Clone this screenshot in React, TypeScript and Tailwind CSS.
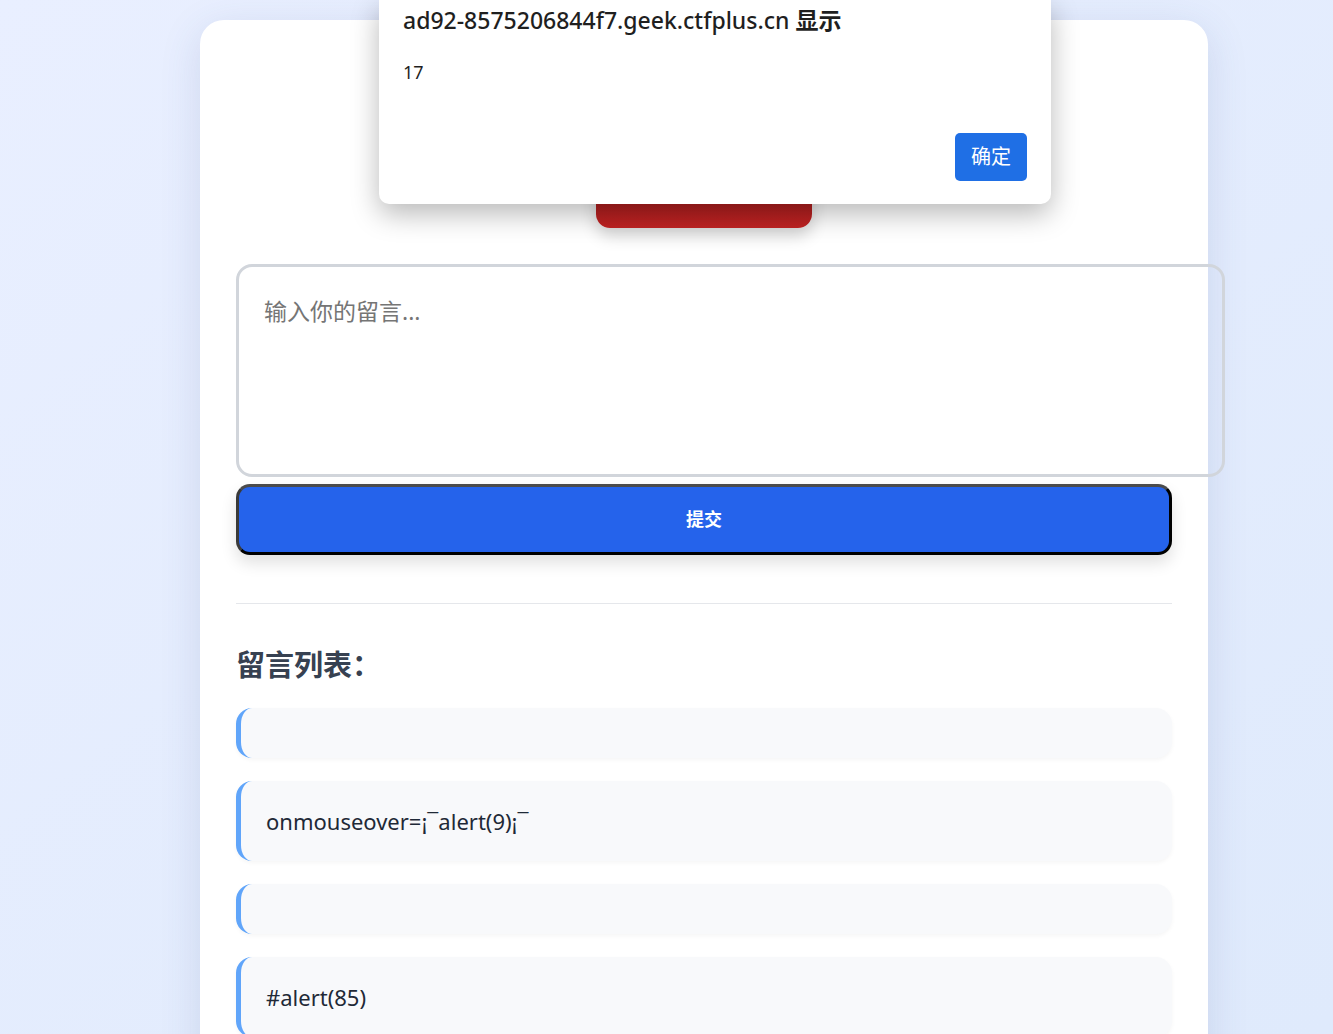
import React from 'react';

const messages: string[] = ['', 'onmouseover=¡¯alert(9)¡¯', '', '#alert(85)'];

const font = { fontFamily: '"Noto Sans", "Noto Sans CJK SC", sans-serif' };

const AlertDialog: React.FC = () => (
  <div className="absolute left-[379px] top-0 w-[672px] h-[204px] bg-white rounded-b-[10px] shadow-[0_10px_28px_rgba(0,0,0,0.28)] px-6 pt-[3px]">
    <div className="text-[23px] leading-[34px] font-medium text-[#1f1f1f]">
      ad92-8575206844f7.geek.ctfplus.cn <span className="font-bold">显示</span>
    </div>
    <div className="mt-[22px] text-[18px] leading-[26px] text-[#1f1f1f]">17</div>
    <div className="flex justify-end mt-[48px]">
      <button className="w-[72px] h-[48px] rounded-[5px] bg-[#1f6fe5] text-white text-[20px]">确定</button>
    </div>
  </div>
);

const MessageItem: React.FC<{ text: string }> = ({ text }) => (
  <div className="bg-[#f8f9fb] border-l-[5px] border-[#60a5fa] rounded-[16px] shadow-[0_2px_4px_rgba(0,0,0,0.04)] px-[25px] min-h-[50px] flex items-center">
    {text && <span className="text-[22px] leading-[80px] text-[#1f2937]">{text}</span>}
  </div>
);

export default function App() {
  return (
    <div
      className="relative min-h-screen h-[1034px] overflow-hidden bg-gradient-to-br from-[#e9efff] to-[#dfeafc]"
      style={font}
    >
      <div className="ml-[200px] mt-[20px] w-[1008px] bg-white rounded-[24px] shadow-[0_10px_40px_rgba(60,80,140,0.15)] px-[36px] pt-[40px] pb-[40px]">
        {/* header area with clear button */}
        <div className="flex flex-col items-center">
          <h1 className="text-[32px] font-bold text-[#1f2937] leading-[48px]">留言板</h1>
          <button className="mt-[64px] w-[216px] h-[56px] rounded-[14px] bg-gradient-to-b from-[#991b1b] to-[#c02222] text-white text-[18px] font-bold shadow-[0_8px_16px_rgba(0,0,0,0.18)] pb-[16px]">
            清空所有留言
          </button>
        </div>

        <textarea
          placeholder="输入你的留言..."
          className="mt-[36px] block w-[989px] h-[213px] border-[3px] border-[#d1d5db] rounded-[16px] px-[25px] py-[28px] text-[23px] leading-[32px] placeholder:text-[#757575] resize-none outline-none"
          style={font}
        />

        <button className="mt-[7px] w-full h-[71px] rounded-[14px] bg-[#2563eb] text-white text-[18px] font-bold border-[3px] border-t-[#4b4b4b] border-l-[#3a3a3a] border-r-black border-b-black shadow-[0_8px_16px_rgba(0,0,0,0.12)]">
          提交
        </button>

        <div className="mt-[48px] border-t border-[#e5e7eb]" />

        <h2 className="mt-[40px] text-[29px] font-bold leading-[42px] text-[#374151]">留言列表：</h2>

        <div className="mt-[22px] flex flex-col gap-[23px]">
          {messages.map((m, i) => (
            <MessageItem key={i} text={m} />
          ))}
        </div>
      </div>

      <AlertDialog />
    </div>
  );
}
